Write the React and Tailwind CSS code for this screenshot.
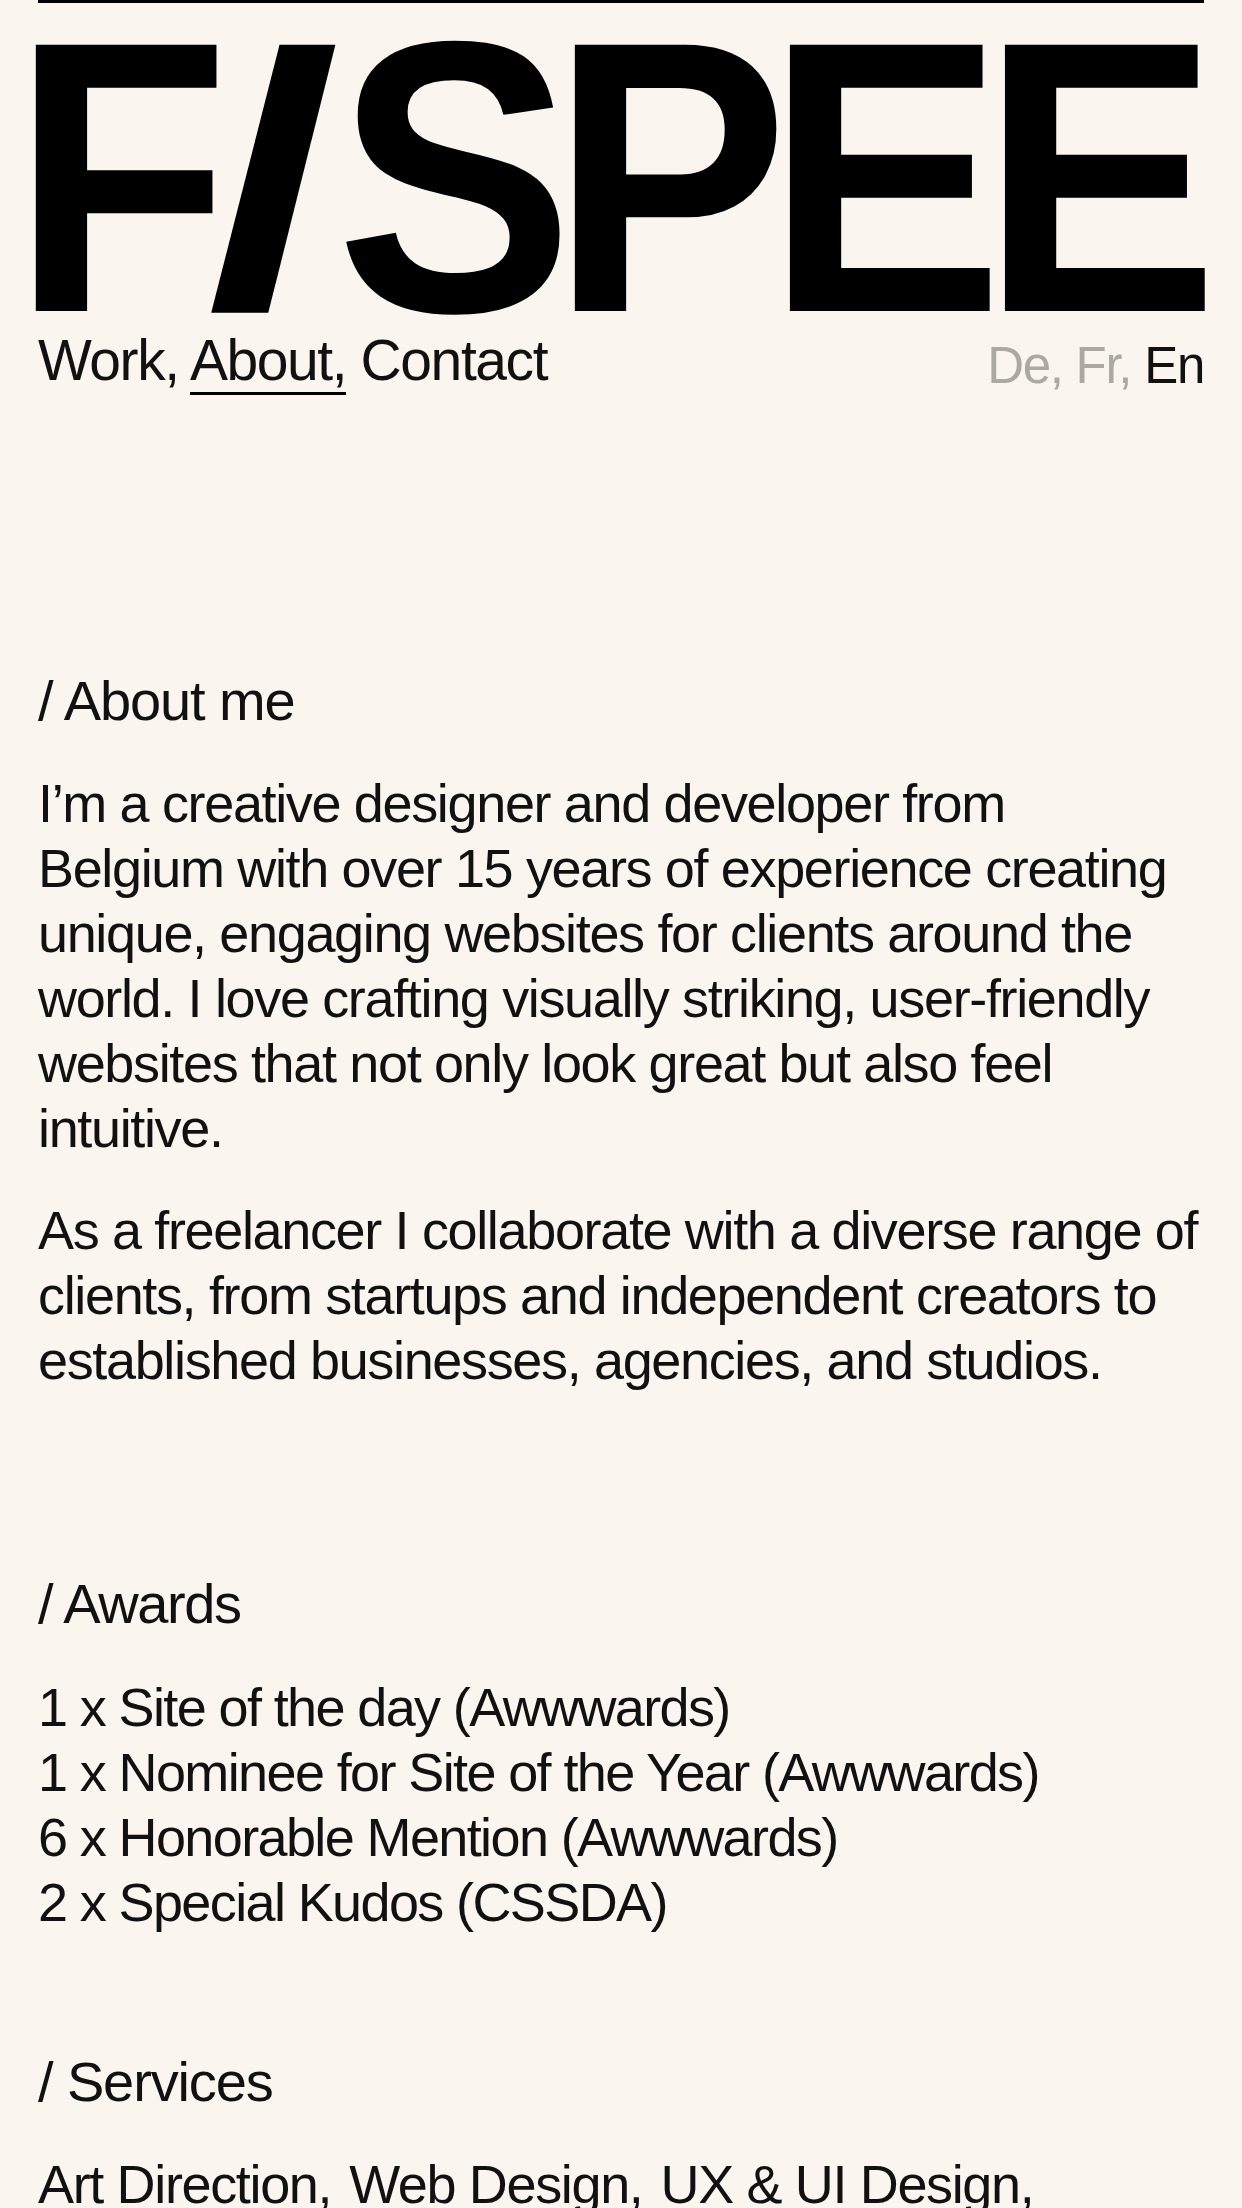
export default function App() {
  const services = [
    "Art Direction,",
    "Web Design,",
    "UX & UI Design,",
    "Front-end Development,",
    "Webflow Development,",
    "Motion Design",
  ];
  return (
    <div className="min-h-screen bg-[#faf6ef] text-[#111111] px-[38px] pb-[200px] font-['Liberation_Sans',Arial,sans-serif]">
      <header className="border-t-[3px] border-black">
        <div className="mt-[25px] -ml-[26px] h-[298px] whitespace-nowrap">
          <div className="inline-block origin-left scale-x-[0.92] text-[387px] leading-[298px] font-bold tracking-[-0.063em] text-black">
            F<span className="inline-block scale-x-[1.35] scale-y-[0.93] translate-y-[4px] ml-[14px] mr-[43px]">/</span>SPEE
          </div>
        </div>
        <nav className="mt-[2px] h-[65px] flex justify-between items-start">
          <div className="text-[57px] leading-[65px] tracking-[-0.025em] whitespace-nowrap">
            Work, <span className="border-b-[3px] border-black">About,</span> Contact
          </div>
          <div className="mt-[5px] text-[51px] leading-[65px] tracking-[-0.025em] whitespace-nowrap">
            <span className="text-[#aca8a2]">De, Fr,</span> En
          </div>
        </nav>
      </header>

      <main>
        <section className="mt-[275px]">
          <h2 className="text-[56px] leading-[65px] tracking-[-0.02em] mb-[38px]">/ About me</h2>
          <p className="text-[54px] leading-[65px] tracking-[-0.025em]">
            I’m a creative designer and developer from Belgium with over 15 years of experience creating unique, engaging websites for clients around the world. I love crafting visually striking, user-friendly websites that not only look great but also feel intuitive.
          </p>
          <p className="mt-[37px] text-[54px] leading-[65px] tracking-[-0.025em]">
            As a freelancer I collaborate with a diverse range of clients, from startups and independent creators to established businesses, agencies, and studios.
          </p>
        </section>

        <section className="mt-[178px]">
          <h2 className="text-[56px] leading-[65px] tracking-[-0.025em] mb-[39px]">/ Awards</h2>
          <ul className="text-[54px] leading-[65px] tracking-[-0.03em]">
            <li>1 x Site of the day (Awwwards)</li>
            <li>1 x Nominee for Site of the Year (Awwwards)</li>
            <li>6 x Honorable Mention (Awwwards)</li>
            <li>2 x Special Kudos (CSSDA)</li>
          </ul>
        </section>

        <section className="mt-[114px]">
          <h2 className="text-[56px] leading-[65px] tracking-[-0.02em] mb-[38px]">/ Services</h2>
          <div className="flex flex-wrap gap-x-[18px] text-[54px] leading-[65px] tracking-[-0.025em]">
            {services.map((s) => (
              <span key={s}>{s}</span>
            ))}
          </div>
        </section>
      </main>
    </div>
  );
}
